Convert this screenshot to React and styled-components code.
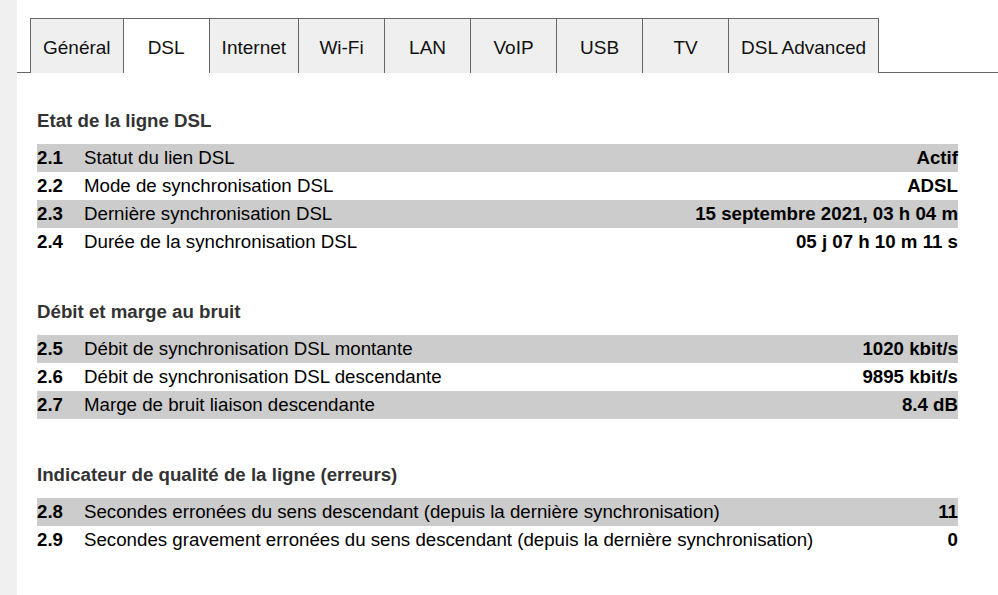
import React from 'react';
import styled, { createGlobalStyle } from 'styled-components';

const GlobalStyle = createGlobalStyle`
	html, body {
		margin: 0;
		padding: 0;
		background: #fff;
	}
	body {
		font-family: "Liberation Sans", Arial, sans-serif;
		color: #000;
	}
`;

const tabs = ['Général', 'DSL', 'Internet', 'Wi-Fi', 'LAN', 'VoIP', 'USB', 'TV', 'DSL Advanced'];

const sections = [
	{
		title: 'Etat de la ligne DSL',
		rows: [
			['2.1', 'Statut du lien DSL', 'Actif'],
			['2.2', 'Mode de synchronisation DSL', 'ADSL'],
			['2.3', 'Dernière synchronisation DSL', '15 septembre 2021, 03 h 04 m'],
			['2.4', 'Durée de la synchronisation DSL', '05 j 07 h 10 m 11 s']
		]
	},
	{
		title: 'Débit et marge au bruit',
		rows: [
			['2.5', 'Débit de synchronisation DSL montante', '1020 kbit/s'],
			['2.6', 'Débit de synchronisation DSL descendante', '9895 kbit/s'],
			['2.7', 'Marge de bruit liaison descendante', '8.4 dB']
		]
	},
	{
		title: 'Indicateur de qualité de la ligne (erreurs)',
		rows: [
			['2.8', 'Secondes erronées du sens descendant (depuis la dernière synchronisation)', '11'],
			['2.9', 'Secondes gravement erronées du sens descendant (depuis la dernière synchronisation)', '0']
		]
	}
];

const Page = styled.div`
	display: flex;
	min-height: 595px;
`;

const SideStrip = styled.aside`
	width: 17px;
	flex-shrink: 0;
	background: #f0f0f0;
`;

const Main = styled.main`
	flex: 1;
	padding-top: 18px;
`;

const TabBar = styled.nav`
	display: flex;
	align-items: flex-end;
	height: 55px;
`;

const Spacer = styled.div`
	width: ${p => (p.$grow ? 'auto' : '14px')};
	flex: ${p => (p.$grow ? 1 : '0 0 auto')};
	border-bottom: 1px solid #666;
`;

const Tab = styled.div`
	box-sizing: border-box;
	min-width: 87px;
	height: 55px;
	padding: 3px 12px 0;
	display: flex;
	align-items: center;
	justify-content: center;
	font-size: 19px;
	color: #111;
	background: ${p => (p.$active ? '#fff' : '#efefef')};
	border: 1px solid #666;
	border-bottom: none;
	margin-left: -1px;
	&:first-of-type {
		margin-left: 0;
	}
`;

const Content = styled.div`
	padding: 38px 40px 0 20px;
`;

const Section = styled.section`
	& + & {
		margin-top: 46px;
	}
`;

const Heading = styled.h2`
	margin: 0 0 13px;
	font-size: 18.7px;
	line-height: 20px;
	font-weight: bold;
	color: #333;
`;

const Row = styled.div`
	display: flex;
	align-items: center;
	height: 28px;
	font-size: 18.7px;
	background: ${p => (p.$shaded ? '#cccccc' : 'transparent')};
`;

const Num = styled.span`
	width: 47px;
	flex-shrink: 0;
	font-weight: bold;
`;

const Label = styled.span`
	flex: 1;
	white-space: nowrap;
`;

const Value = styled.span`
	font-weight: bold;
	text-align: right;
	white-space: nowrap;
`;

export default function App() {
	return (
		<>
			<GlobalStyle />
			<Page>
				<SideStrip />
				<Main>
					<TabBar>
						<Spacer />
						{tabs.map(t => (
							<Tab key={t} $active={t === 'DSL'}>
								{t}
							</Tab>
						))}
						<Spacer $grow />
					</TabBar>
					<Content>
						{sections.map(s => (
							<Section key={s.title}>
								<Heading>{s.title}</Heading>
								{s.rows.map(([n, label, value], i) => (
									<Row key={n} $shaded={i % 2 === 0}>
										<Num>{n}</Num>
										<Label>{label}</Label>
										<Value>{value}</Value>
									</Row>
								))}
							</Section>
						))}
					</Content>
				</Main>
			</Page>
		</>
	);
}
